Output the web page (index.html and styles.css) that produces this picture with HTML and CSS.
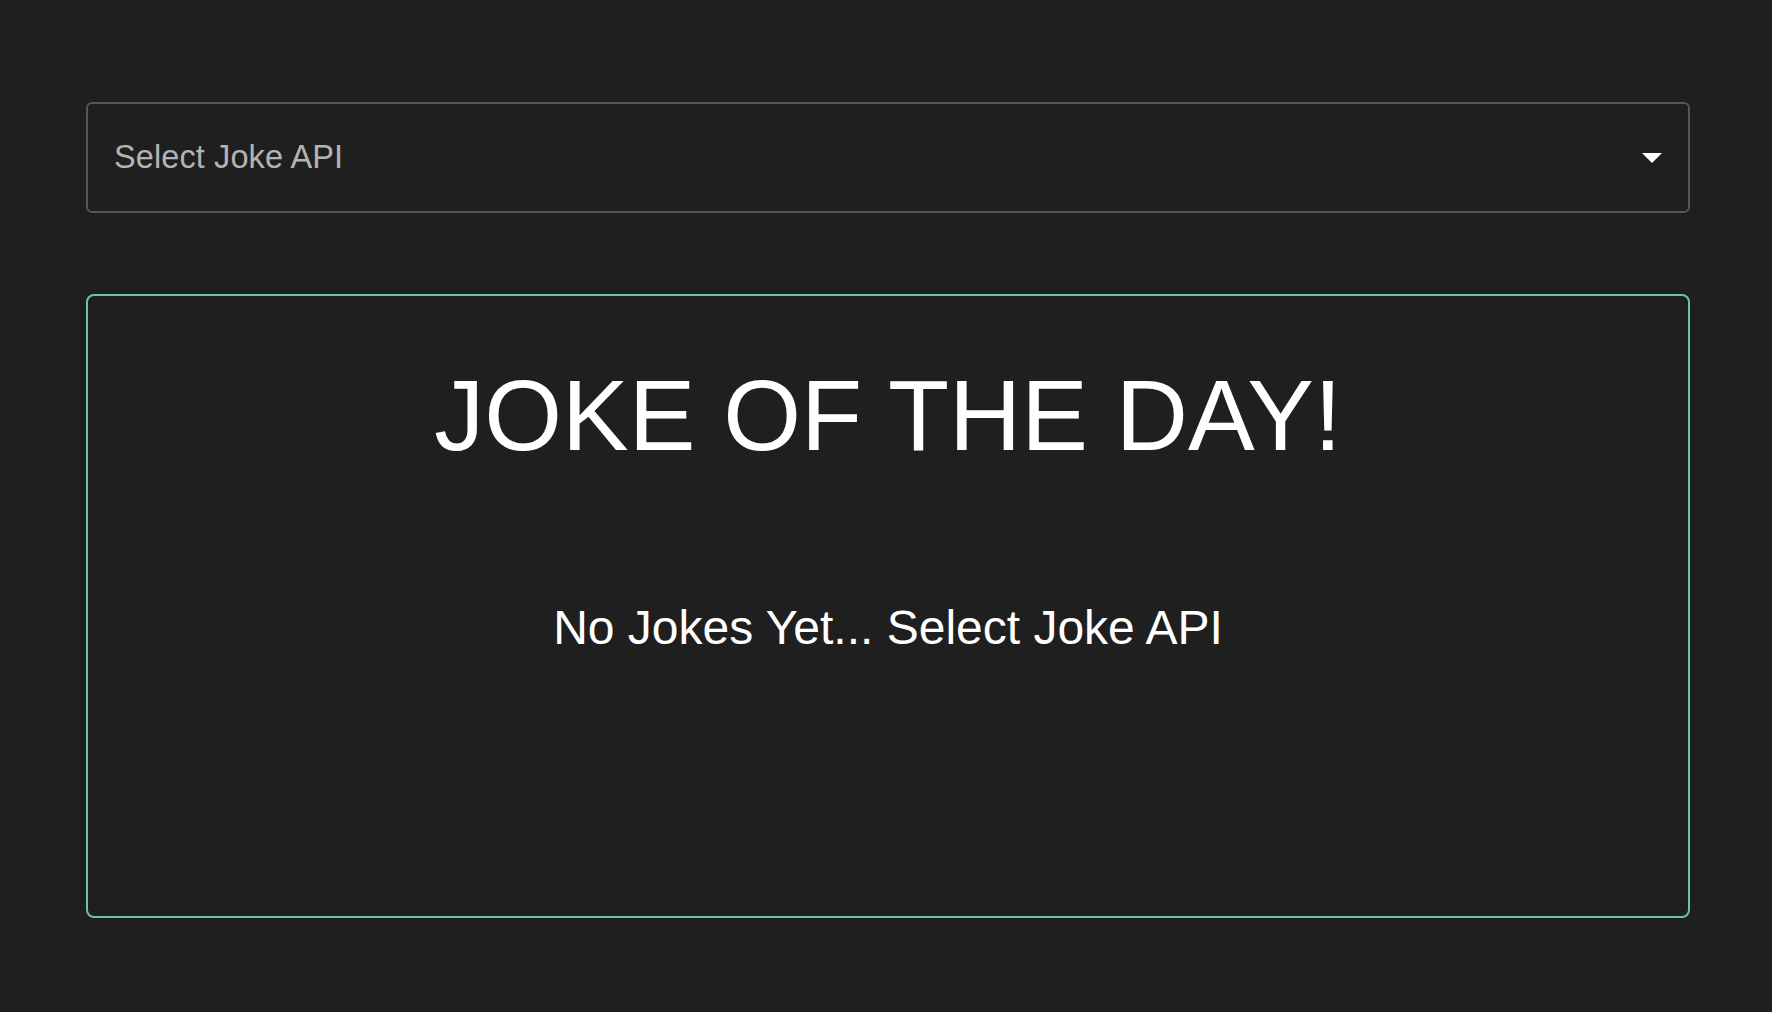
FILE: index.html
```html
<!DOCTYPE html>
<html lang="en">
<head>
<meta charset="utf-8">
<title>Joke of the Day</title>
<link rel="stylesheet" href="styles.css">
</head>
<body>
<main class="page">
  <div class="select" role="combobox" aria-haspopup="listbox">
    <span class="select-label">Select Joke API</span>
    <svg class="select-arrow" width="20" height="10" viewBox="0 0 20 10" aria-hidden="true"><path d="M0 0 L20 0 L10 10 Z" fill="#ffffff"/></svg>
  </div>
  <section class="card">
    <h1 class="card-title">JOKE OF THE DAY!</h1>
    <p class="card-text">No Jokes Yet... Select Joke API</p>
  </section>
</main>
</body>
</html>
```
FILE: styles.css
```css
html, body {
  margin: 0;
  padding: 0;
  background: #1f1f1f;
}
body {
  font-family: "Liberation Sans", Arial, Helvetica, sans-serif;
  color: #ffffff;
}
.page {
  padding: 102px 82px 0 86px;
  display: flex;
  flex-direction: column;
  gap: 81px;
}
.select {
  box-sizing: border-box;
  height: 111px;
  border: 2px solid #565656;
  border-radius: 6px;
  display: flex;
  align-items: center;
  justify-content: space-between;
  padding: 0 26px 0 26px;
}
.select-label {
  font-size: 32.5px;
  letter-spacing: 0.1px;
  color: #b3b3b3;
}
.select-arrow {
  display: block;
  margin-top: 1px;
}
.card {
  box-sizing: border-box;
  height: 624px;
  border: 2px solid #6dc0b4;
  border-radius: 8px;
  display: flex;
  flex-direction: column;
  align-items: center;
  padding-top: 62px;
}
.card-title {
  margin: 0;
  font-size: 100px;
  font-weight: 400;
  line-height: 115px;
}
.card-text {
  margin: 127px 0 0;
  font-size: 48px;
  line-height: 55px;
}
```
